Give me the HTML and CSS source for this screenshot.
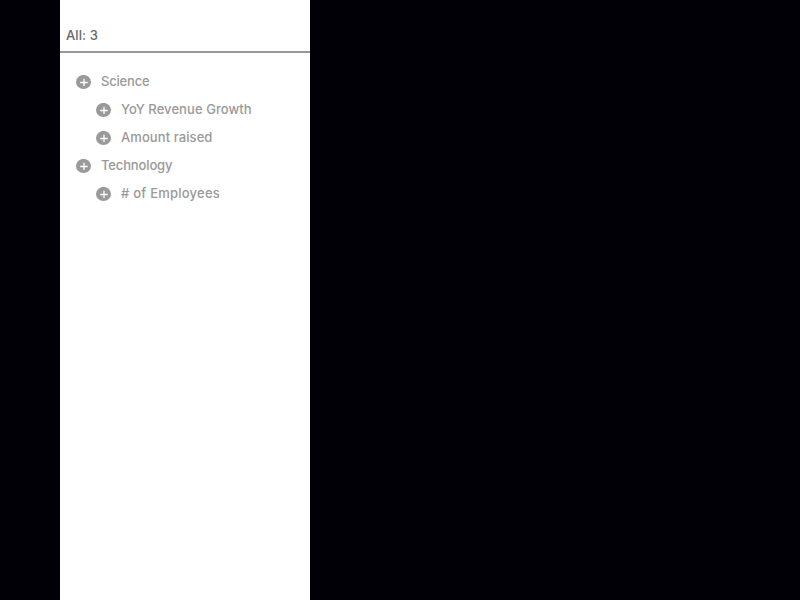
FILE: index.html
```html
<!DOCTYPE html>
<html lang="en">
<head>
<meta charset="utf-8">
<title>Metrics</title>
<link rel="stylesheet" href="styles.css">
</head>
<body>
<svg class="defs" width="0" height="0"><symbol id="plus" viewBox="0 0 15 15"><ellipse cx="7.5" cy="7" rx="7.5" ry="7.1" fill="#999"/><path d="M8 3.7v7.3M4.2 7.5h7.5" stroke="#fff" stroke-width="1.3"/></symbol></svg>
<aside class="panel">
<header class="head"><span class="total">All: 3</span></header>
<ul class="tree">
<li class="row"><svg class="icon"><use href="#plus"/></svg><span class="label science">Science</span></li>
<li class="row child"><svg class="icon"><use href="#plus"/></svg><span class="label revenue">YoY Revenue Growth</span></li>
<li class="row child"><svg class="icon"><use href="#plus"/></svg><span class="label amount">Amount raised</span></li>
<li class="row"><svg class="icon"><use href="#plus"/></svg><span class="label technology">Technology</span></li>
<li class="row child"><svg class="icon"><use href="#plus"/></svg><span class="label employees"># of Employees</span></li>
</ul>
</aside>
</body>
</html>
```
FILE: styles.css
```css
* { box-sizing: border-box; }
body { margin: 0; height: 100vh; overflow: hidden; background: #000006; font-family: Inter, sans-serif; font-size: 13px; font-weight: 450; }
.defs { display: none; }
.panel { width: 250px; height: 100%; margin-left: 60px; background: #fff; }
.head { height: 53px; padding: 25px 6px 0; border-bottom: 2px solid #999; color: #666; line-height: 20px; }
.total { letter-spacing: 0.1px; }
.tree { list-style: none; margin: 0; padding: 15px 16px; }
.row { display: flex; align-items: flex-start; gap: 10px; height: 28px; color: #999; }
.child { padding-left: 20px; }
.icon { width: 15px; height: 15px; margin-top: 7px; flex: none; overflow: visible; }
.label { margin-top: 3px; white-space: nowrap; line-height: 20px; }
.science { letter-spacing: -0.2px; }
.revenue { letter-spacing: 0.07px; }
.amount { letter-spacing: 0.08px; }
.technology { letter-spacing: -0.14px; }
.employees { letter-spacing: 0.23px; }
```
